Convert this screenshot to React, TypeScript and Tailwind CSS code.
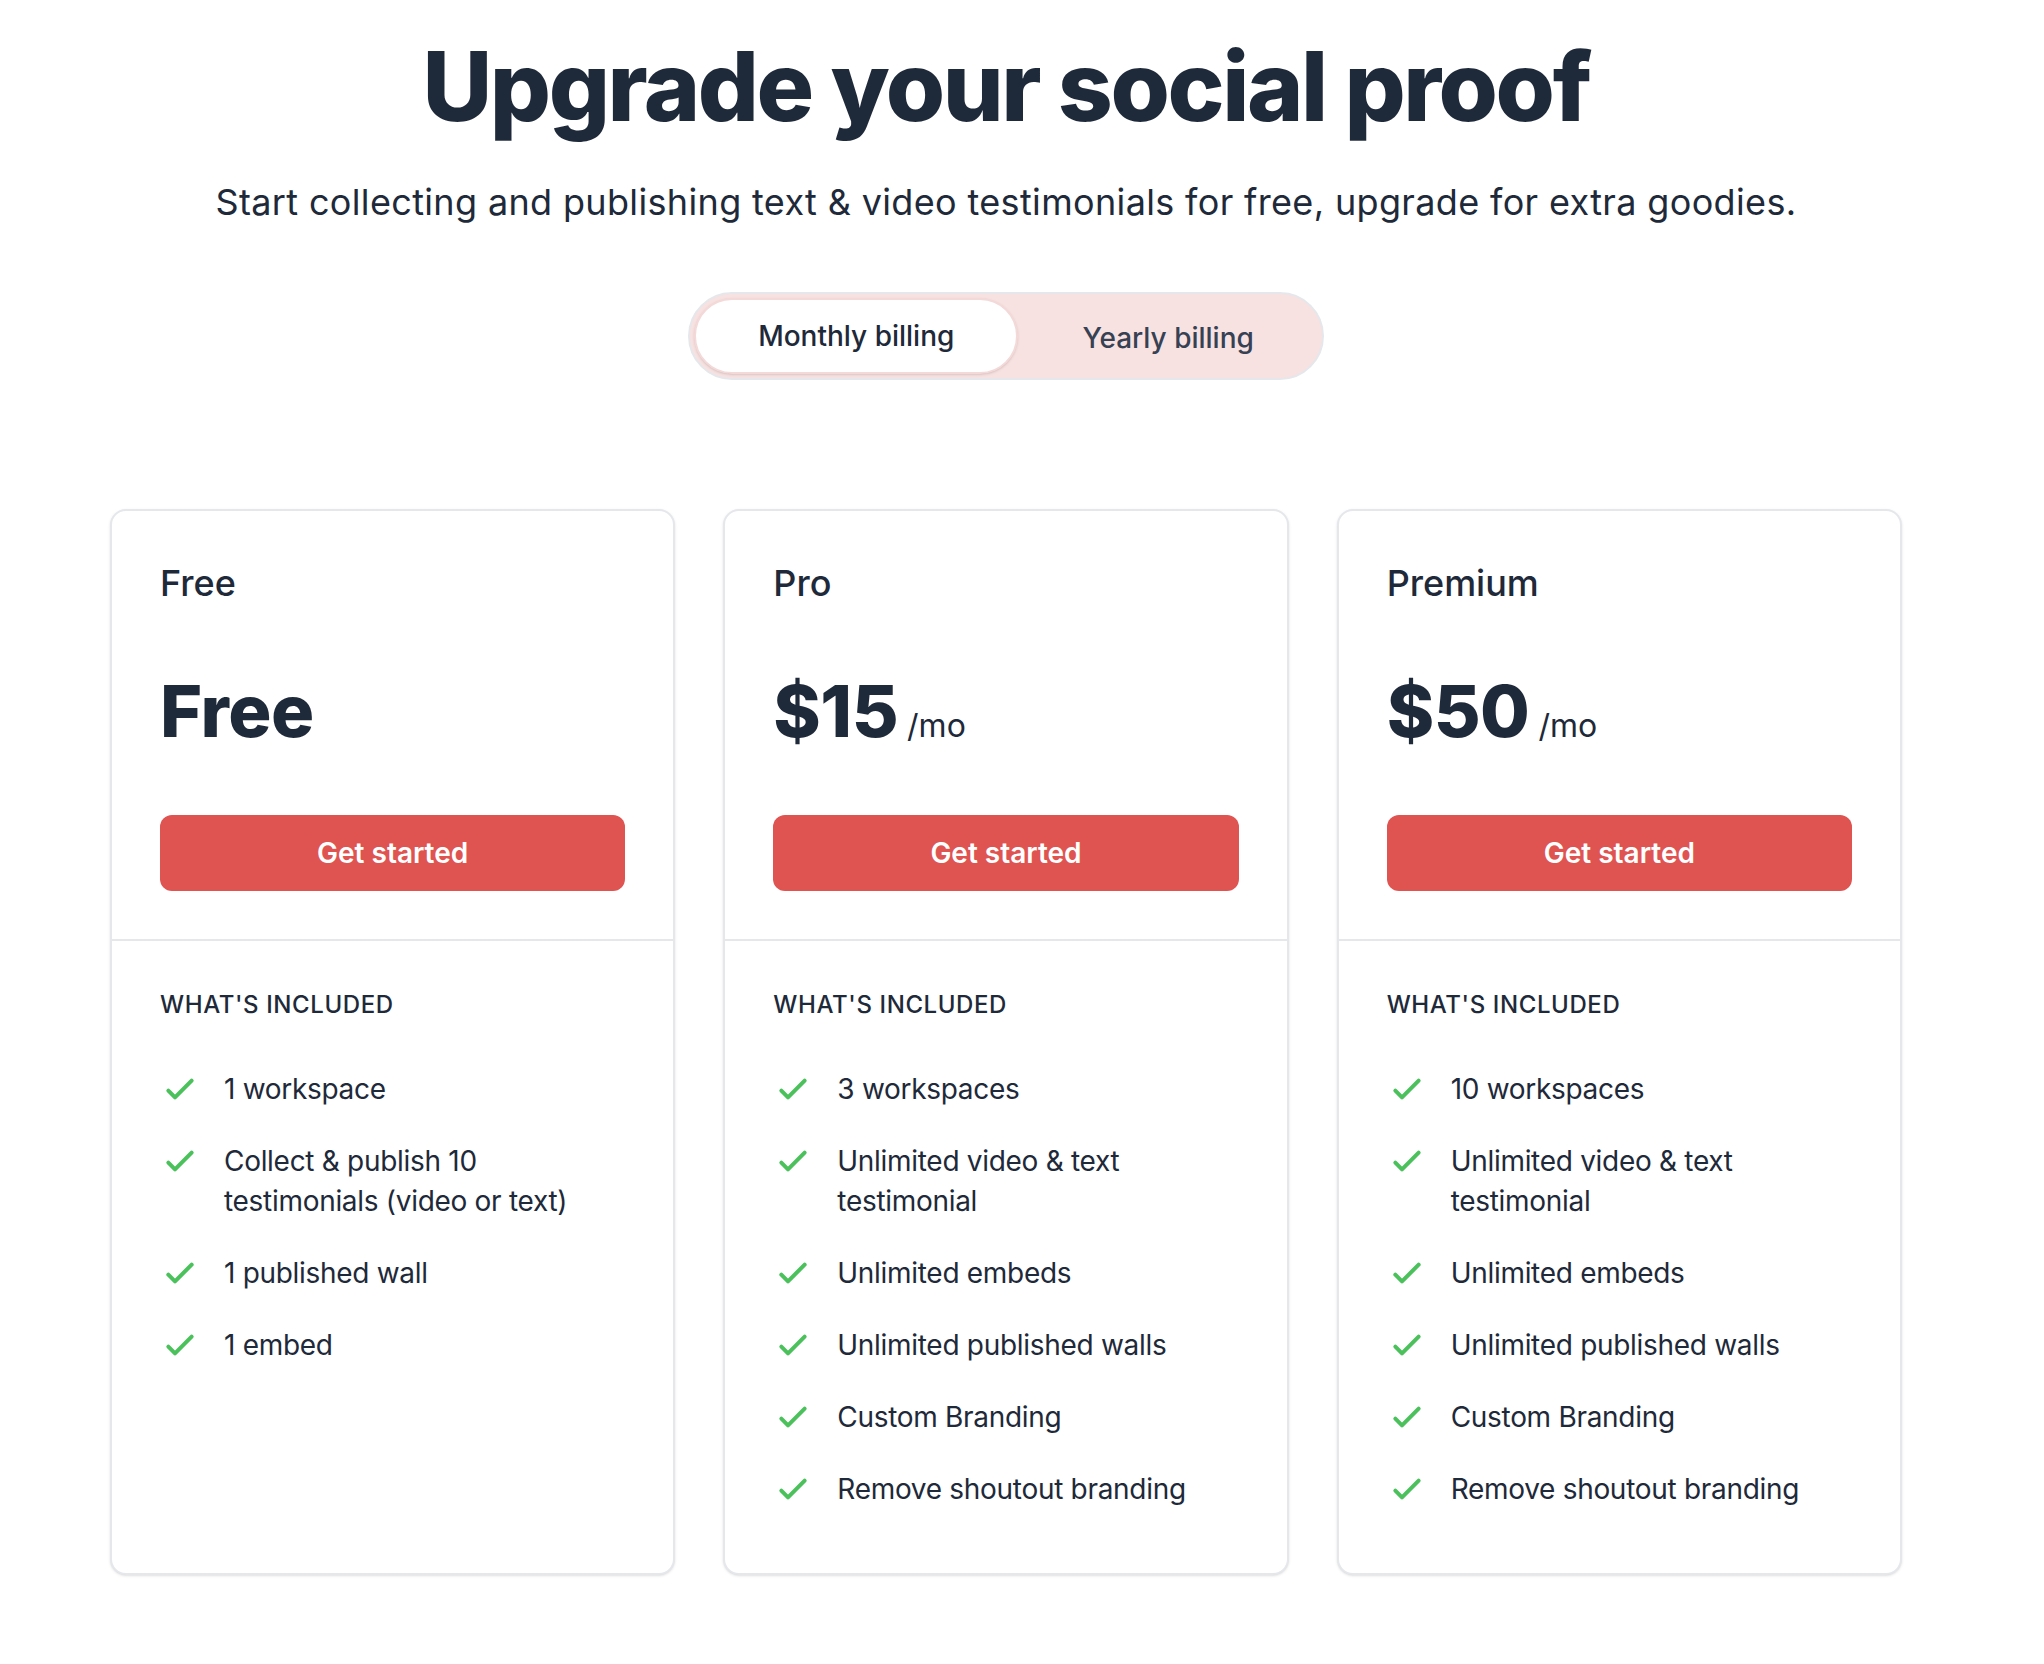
import React from "react";

type Plan = {
  name: string;
  price: string;
  perMonth: boolean;
  features: string[];
};

const plans: Plan[] = [
  {
    name: "Free",
    price: "Free",
    perMonth: false,
    features: [
      "1 workspace",
      "Collect & publish 10 testimonials (video or text)",
      "1 published wall",
      "1 embed",
    ],
  },
  {
    name: "Pro",
    price: "$15",
    perMonth: true,
    features: [
      "3 workspaces",
      "Unlimited video & text testimonial",
      "Unlimited embeds",
      "Unlimited published walls",
      "Custom Branding",
      "Remove shoutout branding",
    ],
  },
  {
    name: "Premium",
    price: "$50",
    perMonth: true,
    features: [
      "10 workspaces",
      "Unlimited video & text testimonial",
      "Unlimited embeds",
      "Unlimited published walls",
      "Custom Branding",
      "Remove shoutout branding",
    ],
  },
];

function CheckIcon() {
  return (
    <svg
      className="h-[40px] w-[40px] shrink-0 text-[#4bc15c]"
      viewBox="0 0 24 24"
      fill="none"
      stroke="currentColor"
      strokeWidth={2.4}
      strokeLinecap="round"
      strokeLinejoin="round"
    >
      <path d="M5 13l4 4L19 7" />
    </svg>
  );
}

function PlanCard({ plan }: { plan: Plan }) {
  return (
    <div className="flex flex-col rounded-[16px] border-2 border-gray-200 bg-white shadow-sm">
      {/* top: name, price, button */}
      <div className="p-[48px]">
        <h2 className="text-[36px] leading-[48px] font-medium text-gray-800">{plan.name}</h2>
        <p className="mt-[64px] text-gray-800">
          <span className="text-[72px] leading-[80px] font-extrabold tracking-[-0.5px]">{plan.price}</span>
          {plan.perMonth && <span className="text-[32px] leading-[48px]"> /mo</span>}
        </p>
        <button className="mt-[64px] block w-full rounded-[12px] border-2 border-transparent bg-[#df5350] py-[16px] text-center text-[28px] leading-[40px] font-semibold text-white">
          Get started
        </button>
      </div>

      {/* features */}
      <div className="flex-1 border-t-2 border-gray-200 px-[48px] pt-[48px] pb-[64px]">
        <h3 className="text-[24px] leading-[32px] font-medium uppercase tracking-wide text-gray-800">
          What's included
        </h3>
        <ul className="mt-[48px] flex flex-col gap-[32px]">
          {plan.features.map((f) => (
            <li key={f} className="flex gap-[24px]">
              <CheckIcon />
              <span className="text-[28px] leading-[40px] tracking-[-0.3px] text-gray-800">{f}</span>
            </li>
          ))}
        </ul>
      </div>
    </div>
  );
}

export default function App() {
  return (
    <div className="min-h-screen bg-white font-['Inter',sans-serif]">
      <div className="w-[2012px] pt-[38px] pb-[90px]">
        <div className="flex flex-col items-center">
          <h1 className="text-[96px] leading-[96px] font-extrabold tracking-tight text-gray-800">
            Upgrade your social proof
          </h1>
          <p className="mt-[40px] text-[36px] leading-[56px] tracking-[0.35px] text-gray-800">
            Start collecting and publishing text &amp; video testimonials for free, upgrade for extra goodies.
          </p>

          {/* billing toggle */}
          <div className="mt-[62px] flex rounded-full border-2 border-gray-200 bg-[#f8e1e1] p-[4px]">
            <button className="rounded-full border-2 border-[#f4d9d9] bg-white px-[62px] py-[16px] text-[28px] leading-[40px] font-medium text-gray-800 shadow-sm">
              Monthly billing
            </button>
            <button className="rounded-full border-2 border-transparent px-[62px] pt-[18px] pb-[14px] text-[28px] leading-[40px] font-medium text-gray-700">
              Yearly billing
            </button>
          </div>
        </div>

        <div className="mx-auto mt-[129px] grid w-[1792px] grid-cols-3 gap-[48px]">
          {plans.map((p) => (
            <PlanCard key={p.name} plan={p} />
          ))}
        </div>
      </div>
    </div>
  );
}
